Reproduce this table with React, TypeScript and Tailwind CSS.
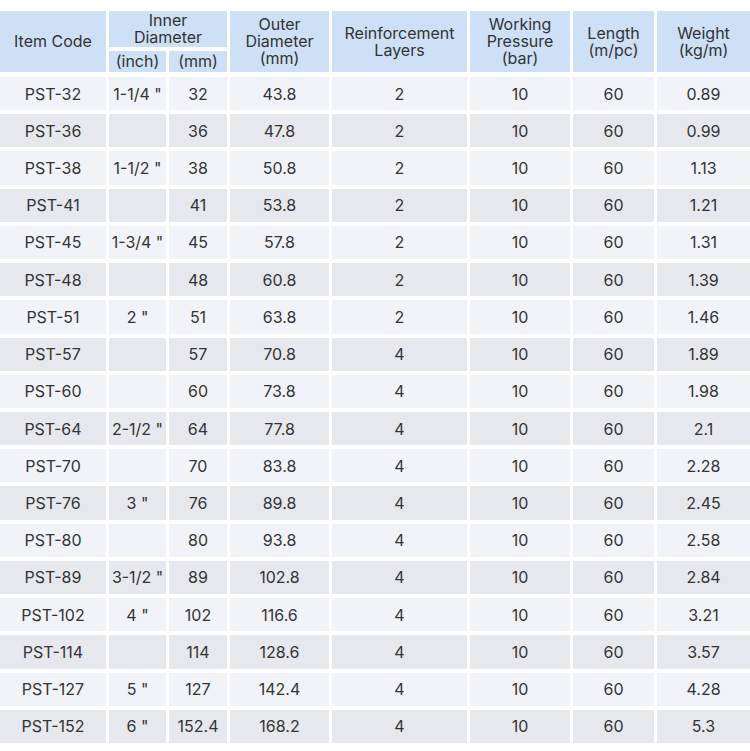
const rows: [string, string, string, string, string, string][] = [
  ['PST-32', '1-1/4 "', '32', '43.8', '2', '0.89'],
  ['PST-36', '', '36', '47.8', '2', '0.99'],
  ['PST-38', '1-1/2 "', '38', '50.8', '2', '1.13'],
  ['PST-41', '', '41', '53.8', '2', '1.21'],
  ['PST-45', '1-3/4 "', '45', '57.8', '2', '1.31'],
  ['PST-48', '', '48', '60.8', '2', '1.39'],
  ['PST-51', '2 "', '51', '63.8', '2', '1.46'],
  ['PST-57', '', '57', '70.8', '4', '1.89'],
  ['PST-60', '', '60', '73.8', '4', '1.98'],
  ['PST-64', '2-1/2 "', '64', '77.8', '4', '2.1'],
  ['PST-70', '', '70', '83.8', '4', '2.28'],
  ['PST-76', '3 "', '76', '89.8', '4', '2.45'],
  ['PST-80', '', '80', '93.8', '4', '2.58'],
  ['PST-89', '3-1/2 "', '89', '102.8', '4', '2.84'],
  ['PST-102', '4 "', '102', '116.6', '4', '3.21'],
  ['PST-114', '', '114', '128.6', '4', '3.57'],
  ['PST-127', '5 "', '127', '142.4', '4', '4.28'],
  ['PST-152', '6 "', '152.4', '168.2', '4', '5.3'],
];

const cols = 'grid grid-cols-[106px_57px_58px_99px_135px_100px_81px_93px] gap-x-[3px]';

function Head({ children, className = '' }: { children: React.ReactNode; className?: string }) {
  return (
    <div className={`flex items-center justify-center bg-[#cde0f6] text-center leading-[17px] ${className}`}>
      {children}
    </div>
  );
}

export default function App() {
  return (
    <div
      className="w-[750px] h-[751px] bg-white pt-[11px] text-[16px] text-[#333]"
      style={{ fontFamily: 'Inter, "Noto Sans", sans-serif' }}
    >
      {/* header */}
      <div className={`${cols} grid-rows-[36px_21px] gap-y-[4px]`}>
        <Head className="row-span-2">Item Code</Head>
        <Head className="col-span-2">
          Inner
          <br />
          Diameter
        </Head>
        <Head className="row-span-2">
          Outer
          <br />
          Diameter
          <br />
          (mm)
        </Head>
        <Head className="row-span-2">
          Reinforcement
          <br />
          Layers
        </Head>
        <Head className="row-span-2">
          Working
          <br />
          Pressure
          <br />
          (bar)
        </Head>
        <Head className="row-span-2">
          Length
          <br />
          (m/pc)
        </Head>
        <Head className="row-span-2">
          Weight
          <br />
          (kg/m)
        </Head>
        <Head>(inch)</Head>
        <Head>(mm)</Head>
      </div>

      {/* body */}
      <div className={`${cols} mt-[5px] h-[666px] grid-rows-[repeat(18,minmax(0,1fr))] gap-y-[4px]`}>
        {rows.map((r, i) => {
          const bg = i % 2 === 0 ? 'bg-[#f2f3f8]' : 'bg-[#e7e8ed]';
          const cells = [r[0], r[1], r[2], r[3], r[4], '10', '60', r[5]];
          return cells.map((c, j) => (
            <div key={`${i}-${j}`} className={`flex items-center justify-center ${bg}`}>
              {c}
            </div>
          ));
        })}
      </div>
    </div>
  );
}
